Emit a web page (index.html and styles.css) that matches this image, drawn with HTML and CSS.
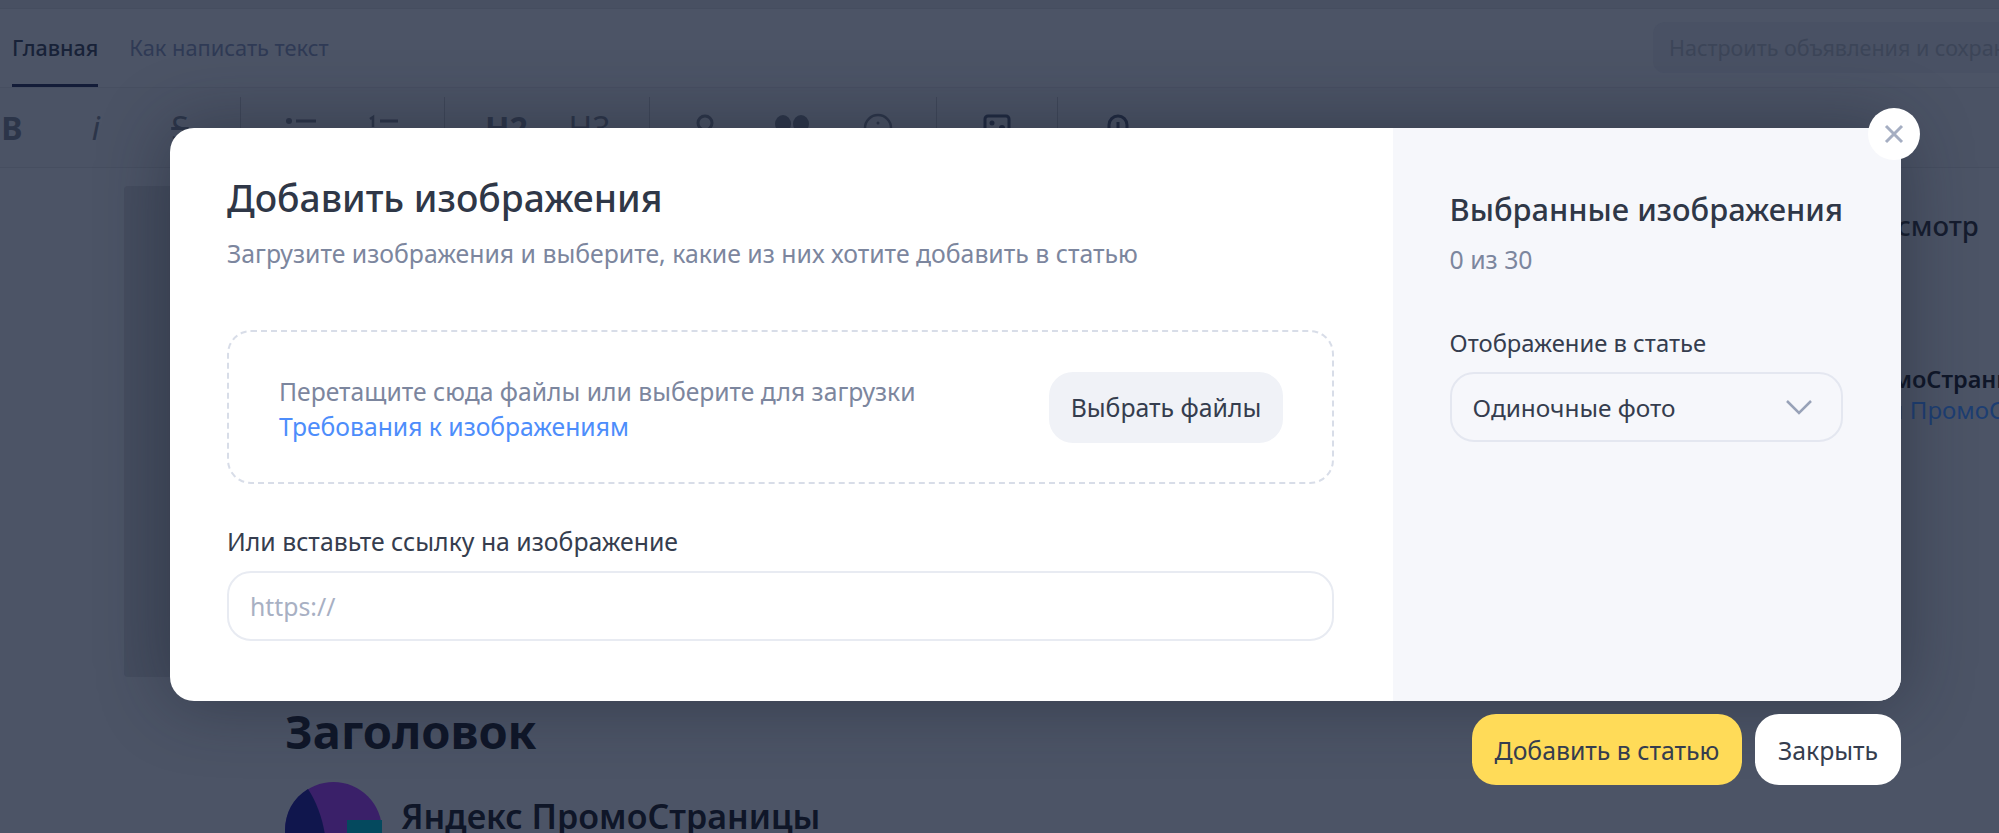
FILE: index.html
```html
<!DOCTYPE html>
<html lang="ru">
<head>
    <meta charset="UTF-8">
    <meta name="viewport" content="width=device-width, initial-scale=1.0">
    <title>Добавить изображения</title>
    <link rel="stylesheet" href="styles.css">
</head>
<body>
    <!-- Editor behind the dialog -->
    <div class="page">
        <div class="topline"></div>

        <header class="tabs">
            <nav class="tabs-nav">
                <a class="tab tab-active">Главная</a>
                <a class="tab">Как написать текст</a>
            </nav>
            <div class="ads-btn">Настроить объявления и сохранить</div>
        </header>

        <div class="toolbar">
            <div class="tool-group group-format">
                <span class="tool tool-b">B</span>
                <span class="tool tool-i">i</span>
                <span class="tool tool-s">S</span>
            </div>
            <div class="tool-group group-list">
                <span class="tool">
                    <svg width="36" height="30" viewBox="0 0 36 30"><circle cx="5" cy="8" r="3" fill="#2c3549"/><path d="M12 8h20" stroke="#2c3549" stroke-width="3"/></svg>
                </span>
                <span class="tool">
                    <svg width="36" height="30" viewBox="0 0 36 30"><path d="M3 6l3-2v10" stroke="#2c3549" stroke-width="2.5" fill="none"/><path d="M13 8h18" stroke="#2c3549" stroke-width="3"/></svg>
                </span>
            </div>
            <div class="tool-group group-head">
                <span class="tool tool-h tool-h-bold">H2</span>
                <span class="tool tool-h">H3</span>
            </div>
            <div class="tool-group group-insert">
                <span class="tool">
                    <svg width="36" height="30" viewBox="0 0 36 30"><circle cx="17" cy="10" r="7" fill="none" stroke="#2c3549" stroke-width="3"/></svg>
                </span>
                <span class="tool">
                    <svg width="36" height="30" viewBox="0 0 36 30"><ellipse cx="9" cy="11" rx="8" ry="9" fill="#2c3549"/><ellipse cx="27" cy="11" rx="8" ry="9" fill="#2c3549"/></svg>
                </span>
                <span class="tool">
                    <svg width="36" height="30" viewBox="0 0 36 30"><circle cx="18" cy="15" r="13" fill="none" stroke="#2c3549" stroke-width="2.5"/><circle cx="18" cy="10" r="1.5" fill="#2c3549"/></svg>
                </span>
            </div>
            <div class="tool-group group-image">
                <span class="tool">
                    <svg width="36" height="30" viewBox="0 0 36 30"><rect x="6" y="3" width="24" height="24" rx="3" fill="none" stroke="#1f2940" stroke-width="3"/><circle cx="13" cy="10" r="2.5" fill="#1f2940"/><circle cx="23" cy="15" r="3" fill="#1f2940"/></svg>
                </span>
            </div>
            <div class="tool-group group-attach">
                <span class="tool">
                    <svg width="36" height="30" viewBox="0 0 36 30"><rect x="9" y="3" width="18" height="30" rx="9" fill="none" stroke="#1f2940" stroke-width="3"/><path d="M18 9v10" stroke="#1f2940" stroke-width="3"/></svg>
                </span>
            </div>
        </div>

        <main class="content">
            <div class="canvas">
                <div class="cover"></div>
                <h1 class="article-title">Заголовок</h1>
                <div class="author">
                    <svg class="avatar" viewBox="0 0 97 97">
                        <circle cx="48.500" cy="48.500" r="48.500" fill="#3a2069"/>
                        <path d="M23 7C8 16 0 31 0 48.500C0 75 22 97 42 97C44 60 38 30 23 7Z" fill="#10164d"/>
                        <rect x="62" y="38" width="35" height="59" fill="#04495e"/>
                    </svg>
                    <span class="author-name">Яндекс ПромоСтраницы</span>
                </div>
            </div>
            <aside class="side">
                <p class="side-title">Предпросмотр</p>
                <p class="side-name">Яндекс ПромоСтраницы</p>
                <p class="side-sub">Компания <a class="side-link">ПромоСтраницы</a></p>
            </aside>
        </main>
    </div>

    <!-- Image dialog -->
    <div class="dialog-wrap">
        <div class="dialog">
            <section class="dialog-main">
                <h2 class="dialog-title">Добавить изображения</h2>
                <p class="dialog-sub">Загрузите изображения и выберите, какие из них хотите добавить в статью</p>

                <div class="dropzone">
                    <div class="dropzone-text">
                        <p class="drop-hint">Перетащите сюда файлы или выберите для загрузки</p>
                        <a class="drop-link">Требования к изображениям</a>
                    </div>
                    <button class="btn btn-soft" type="button">Выбрать файлы</button>
                </div>

                <label class="field-label" for="imageUrl">Или вставьте ссылку на изображение</label>
                <input class="field" id="imageUrl" type="text" placeholder="https://">
            </section>

            <aside class="dialog-side">
                <h3 class="side-heading">Выбранные изображения</h3>
                <p class="side-count">0 из 30</p>
                <p class="side-label">Отображение в статье</p>
                <div class="select">
                    <span>Одиночные фото</span>
                    <svg width="28" height="16" viewBox="0 0 28 16"><path d="M2 2l12 12L26 2" fill="none" stroke="#98a2b8" stroke-width="2.500"/></svg>
                </div>
            </aside>

            <button class="dialog-close" type="button" aria-label="Закрыть">
                <svg width="20" height="20" viewBox="0 0 20 20"><path d="M2 2l16 16M18 2L2 18" stroke="#a5aec2" stroke-width="3"/></svg>
            </button>
        </div>

        <div class="dialog-actions">
            <button class="btn btn-yellow" type="button">Добавить в статью</button>
            <button class="btn btn-white" type="button">Закрыть</button>
        </div>
    </div>
</body>
</html>
```

FILE: styles.css
```css
/* General page styling */
* {
    box-sizing: border-box;
}

html,
body {
    height: 100%;
}

body {
    margin: 0;
    overflow: hidden;
    position: relative;
    background-color: #4c5466;
    color: #353d4e;
    font-family: "Noto Sans", "Open Sans", sans-serif;
}

p,
h1,
h2,
h3 {
    margin: 0;
}

/* Dimmed editor behind the dialog */
.page {
    height: 833px;
    overflow: hidden;
}

.topline {
    height: 9px;
    background-color: #485062;
    border-bottom: 1px solid #454d5f;
}

.tabs {
    height: 79px;
    display: flex;
    justify-content: space-between;
    border-bottom: 1px solid #474f61;
}

.tabs-nav {
    display: flex;
    gap: 31px;
    padding-left: 12px;
}

.tab {
    height: 78px;
    padding-top: 26px;
    font-size: 21.8px;
    line-height: 26px;
    color: #2f3a55;
}

.tab-active {
    color: #182238;
    font-size: 21.5px;
    font-weight: 500;
    border-bottom: 3px solid #131c38;
}

.ads-btn {
    align-self: flex-start;
    width: 346px;
    height: 51px;
    margin-top: 13px;
    padding: 12px 0 12px 16px;
    border-radius: 12px 0 0 12px;
    background-color: #495164;
    color: #3c4558;
    font-size: 21.5px;
    line-height: 27px;
    white-space: nowrap;
    overflow: hidden;
}

/* Formatting toolbar */
.toolbar {
    height: 80px;
    display: flex;
    margin-left: -30px;
    border-bottom: 1px solid #464e60;
    background-color: #4b5365;
}

.tool-group {
    display: flex;
    align-items: center;
    height: 42px;
    margin-top: 9px;
    border-right: 1px solid #3f4759;
}

.tool {
    display: flex;
    justify-content: center;
    align-items: flex-start;
    height: 42px;
    padding-top: 16px;
    color: #2c3549;
    font-size: 32px;
    line-height: 30px;
}

.group-format {
    width: 271px;
}

.group-format .tool {
    width: 84px;
}

.tool-b {
    font-weight: 700;
}

.tool-i {
    font-style: italic;
}

.tool-s {
    text-decoration: line-through;
}

.group-list {
    width: 204px;
    padding-left: 19px;
}

.group-list .tool {
    width: 83px;
}

.group-head {
    width: 205px;
    padding-left: 20px;
}

.group-head .tool {
    width: 83px;
}

.tool-h-bold {
    font-weight: 700;
}

.group-insert {
    width: 287px;
    padding-left: 13px;
}

.group-insert .tool {
    width: 86px;
}

.group-image {
    width: 121px;
}

.group-image .tool,
.group-attach .tool {
    width: 120px;
}

.group-attach {
    width: 120px;
    border-right: none;
}

/* Article area */
.content {
    display: flex;
    justify-content: space-between;
}

.canvas {
    width: 1617px;
    padding: 18px 0 0 124px;
}

.cover {
    width: 1400px;
    height: 491px;
    border-radius: 4px;
    background-color: #454d5f;
}

.article-title {
    margin: 24px 0 0 161px;
    font-size: 47px;
    line-height: 60px;
    font-weight: 700;
    color: #0f1628;
}

.author {
    display: flex;
    align-items: flex-start;
    gap: 19px;
    margin: 21px 0 0 161px;
}

.avatar {
    width: 97px;
    height: 97px;
    flex-shrink: 0;
}

.author-name {
    margin-top: 14px;
    font-size: 34px;
    line-height: 40px;
    font-weight: 600;
    white-space: nowrap;
    color: #0f1628;
}

.side {
    width: 382px;
    padding-top: 42px;
    white-space: nowrap;
}

.side-title {
    padding-left: 160px;
    font-size: 27.5px;
    line-height: 32px;
    font-weight: 500;
    color: #151c2e;
}

.side-name {
    margin-top: 122px;
    padding-left: 139px;
    font-size: 23.5px;
    line-height: 30px;
    font-weight: 600;
    color: #0f1628;
}

.side-sub {
    padding-left: 168px;
    font-size: 24px;
    line-height: 32px;
    color: #323b4e;
}

.side-link {
    color: #1d3e72;
}

/* Dialog */
.dialog-wrap {
    position: absolute;
    top: 128px;
    left: 170px;
    width: 1731px;
}

.dialog {
    position: relative;
    height: 573px;
    display: flex;
    border-radius: 24px;
    background-color: #ffffff;
    box-shadow: 0 0 70px rgba(25, 30, 45, 0.45);
}

.dialog-main {
    width: 1223px;
    padding: 45px 57px 0;
    display: flex;
    flex-direction: column;
    align-items: flex-start;
}

.dialog-title {
    font-size: 37.2px;
    line-height: 50px;
    font-weight: 500;
    color: #2f3747;
}

.dialog-sub {
    margin-top: 14px;
    font-size: 24.8px;
    line-height: 32px;
    color: #7c869e;
}

.dropzone {
    width: 1107px;
    height: 154px;
    margin-top: 61px;
    padding: 0 49px 0 50px;
    display: flex;
    align-items: center;
    justify-content: space-between;
    border: 2px dashed #d8dde8;
    border-radius: 24px;
}

.dropzone-text {
    padding-top: 4px;
}

.drop-hint {
    font-size: 24.7px;
    line-height: 35px;
    color: #7c869e;
}

.drop-link {
    font-size: 24.7px;
    line-height: 35px;
    color: #4d8dfb;
}

.btn {
    height: 71px;
    padding: 0;
    border: none;
    border-radius: 24px;
    font-family: inherit;
    font-size: 24.8px;
    color: #353d4e;
}

.btn-soft {
    width: 234px;
    background-color: #f0f2f7;
}

.field-label {
    margin-top: 41px;
    font-size: 24.8px;
    line-height: 32px;
    color: #353d4e;
}

.field {
    width: 1107px;
    height: 70px;
    margin-top: 14px;
    padding: 0 21px;
    border: 2px solid #e8ebf2;
    border-radius: 24px;
    font-family: inherit;
    font-size: 24.8px;
    color: #353d4e;
    outline: none;
}

.field::placeholder {
    color: #a8b0c3;
}

.dialog-side {
    flex: 1;
    padding: 60px 58px 0 57px;
    border-radius: 0 24px 24px 0;
    background-color: #f6f7fb;
}

.side-heading {
    font-size: 30.800px;
    line-height: 42px;
    font-weight: 500;
    color: #2f3747;
    white-space: nowrap;
}

.side-count {
    margin-top: 13px;
    font-size: 24.8px;
    line-height: 32px;
    color: #7c869e;
}

.side-label {
    margin-top: 52px;
    font-size: 23.8px;
    line-height: 32px;
    color: #353d4e;
}

.select {
    height: 70px;
    margin-top: 13px;
    padding: 0 28px 0 21px;
    display: flex;
    align-items: center;
    justify-content: space-between;
    border: 2px solid #e4e7f0;
    border-radius: 24px;
    font-size: 24.4px;
    color: #353d4e;
}

.dialog-close {
    position: absolute;
    top: -20px;
    right: -19px;
    width: 52px;
    height: 52px;
    padding: 0;
    display: flex;
    align-items: center;
    justify-content: center;
    border: none;
    border-radius: 50%;
    background-color: #ffffff;
}

.dialog-actions {
    position: relative;
    display: flex;
    justify-content: flex-end;
    gap: 13px;
    margin-top: 13px;
}

.btn-yellow {
    width: 270px;
    background-color: #ffdb58;
}

.btn-white {
    width: 146px;
    background-color: #ffffff;
}
```
